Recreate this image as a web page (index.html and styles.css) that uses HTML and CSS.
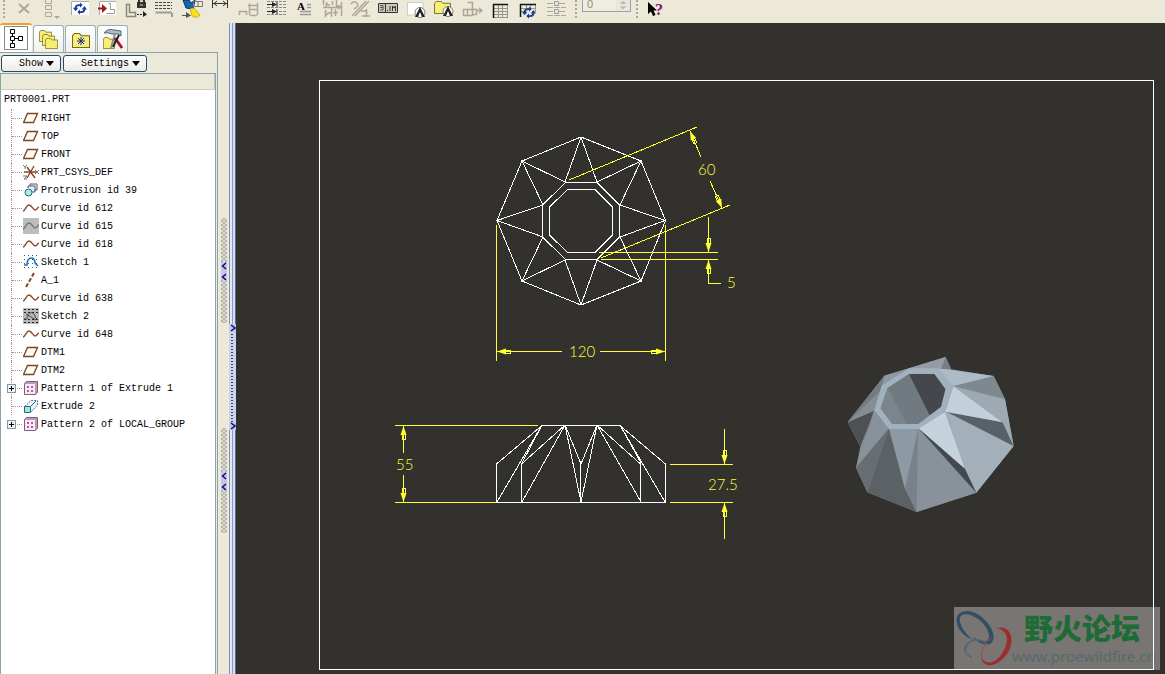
FILE: index.html
```html
<!DOCTYPE html>
<html lang="en">

<head>
  <meta charset="UTF-8">
  <meta name="viewport" content="width=device-width, initial-scale=1.0">
  <title>PRT0001.PRT</title>
  <link rel="stylesheet" href="styles.css">
</head>

<body>
  <!-- Shared icons -->
  <svg class="defs" aria-hidden="true">
    <symbol id="i-plane" viewBox="0 0 16 16"><path d="M4.500 3.500H14.500L10.500 12.500H.500Z" fill="#fffaf2" stroke="#7b4a2a" stroke-width="1.400"/></symbol>
    <symbol id="i-curve" viewBox="0 0 16 16"><path d="M0 11C3 10 3 5 6 5S10 10 12 10 14 8 16 7" fill="none" stroke="#8a4a30" stroke-width="1.400"/></symbol>
    <symbol id="i-curve-off" viewBox="0 0 16 16"><rect width="16" height="16" fill="#bdbdbd"/><path d="M0 11C3 10 3 5 6 5S10 10 12 10 14 8 16 7" fill="none" stroke="#777" stroke-width="1.400"/></symbol>
    <symbol id="i-csys" viewBox="0 0 16 16"><path d="M1 8H13M4 3L12 14M11 2L4 14" stroke="#8a4420" stroke-width="1.400"/><path d="M0 1L2 3L4 1M2 3V5M12 6L16 10M16 6L12 10M0 12H4L1 15H4" stroke="#777" fill="none"/></symbol>
    <symbol id="i-protrusion" viewBox="0 0 16 16"><path d="M7 4V2H14V8H11M5 6V4H12V10H9" fill="#e8eef4" stroke="#4a6078"/><circle cx="5.500" cy="10.500" r="3.500" fill="#a6f0ea" stroke="#39616d"/></symbol>
    <symbol id="i-sketch" viewBox="0 0 16 16"><path d="M1 1.500H16M1 5.500H16M1 9.500H16M1 13.500H16" stroke="#345a8c" stroke-dasharray="1 3"/><path d="M1 11H4C4 2 12 2 12 9L15 12" fill="none" stroke="#1f6db5" stroke-width="1.500"/></symbol>
    <symbol id="i-sketch-off" viewBox="0 0 16 16"><rect width="16" height="16" fill="#b8b8b8"/><path d="M1 1.500H16M1 4.500H16M1 11.500H16M1 14.500H16" stroke="#222" stroke-dasharray="2 2"/><path d="M1 11H4C4 3 12 3 12 9L15 12M3 6L13 12" fill="none" stroke="#444"/></symbol>
    <symbol id="i-axis" viewBox="0 0 16 16"><path d="M11 1L3 15" stroke="#8a4420" stroke-width="2" stroke-dasharray="4 2"/></symbol>
    <symbol id="i-pattern" viewBox="0 0 16 16"><path d="M1.500 3.500L3.500 1.500H14.500V12.500L12.500 14.500H1.500Z" fill="#b99bb6" stroke="#7a6078"/><path d="M2 4H12V14H2Z" fill="#fde6f9"/><path d="M4 7H6M8 7H10M4 11H6M8 11H10" stroke="#8a3a80" stroke-width="1.500"/></symbol>
    <symbol id="i-extrude" viewBox="0 0 16 16"><path d="M1.500 8.500L8 2.500H14.500V7L8 14" fill="#eef6fa" stroke="#4f7890" stroke-dasharray="2 1"/><path d="M8 8L13 3" stroke="#345a70"/><path d="M1.500 8.500H7.500V14.500H1.500Z" fill="#8ff0e2" stroke="#39616d"/></symbol>
    <symbol id="i-refresh" viewBox="0 0 16 14"><path d="M3 8V6Q3 3 7 3H9M13 6V8Q13 11 9 11H7" fill="none" stroke="#123c9c" stroke-width="2"/><path d="M0 6H6L3 10ZM10 8H16L13 4ZM8 0V6L11 3ZM8 8V14L5 11Z" fill="#123c9c"/></symbol>
    <symbol id="i-folder" viewBox="0 0 18 14" preserveAspectRatio="none"><path d="M.500 2.500L2.500.500H7.500L9.500 2.500H17.500V13.500H.500Z" fill="#f9ee74" stroke="#6f6828"/></symbol>
  </svg>

  <header class="toolbar">
    <span class="separator"></span>
    <button class="tool" aria-label="Delete" disabled><svg viewBox="0 0 28 23"><path d="M9 4L19 13M19 4L9 13" stroke="#aca899" stroke-width="2"/></svg></button>
    <button class="tool" aria-label="View states" disabled><svg viewBox="0 0 28 23"><path d="M7.500-1.500H13.500V3.500H7.500ZM7.500 5.500H13.500V9.500H7.500ZM7.500 12.500H13.500V16.500H7.500Z" fill="none" stroke="#aca899"/><path d="M16 16H22L19 19Z" fill="#aca899"/></svg></button>
    <button class="tool" aria-label="Update"><svg viewBox="0 0 28 23"><path d="M5 1H23V15H5Z" fill="#fff"/><path d="M5.500 15V1.500H23" fill="none" stroke="#aaa"/><use href="#i-refresh" x="7" y="2" width="14" height="13"/></svg></button>
    <button class="tool" aria-label="Insert view"><svg viewBox="0 0 28 23"><path d="M5 1H22V15H5Z" fill="#fff"/><path d="M5.500 15V1.500H22" fill="none" stroke="#aaa"/><path d="M4 7.500H8V4L13 8.500L8 13V9.500H4Z" fill="#a51a16"/><path d="M14.500 3.500H16.500V9.500H20.500V13.500H12.500" fill="none" stroke="#999"/></svg></button>
    <button class="tool" aria-label="Lock view"><svg viewBox="0 0 28 23"><path d="M4.500 4.500H7.500V12.500H13.500V16.500H4.500Z" fill="none" stroke="#8b8778" stroke-width="1.500"/><path d="M15 2H24V8H15Z" fill="#333"/><path d="M17 3V0Q19-2 22 0V3" fill="none" stroke="#333" stroke-width="2"/><path d="M18 5H21" stroke="#ddd"/><path d="M15 14.500H21" stroke="#222" stroke-dasharray="2 1"/><path d="M21 11L25 14.500L21 17Z" fill="#222"/></svg></button>
    <button class="tool" aria-label="Line style"><svg viewBox="0 0 28 23"><path d="M5 2.500H22M5 5.500H22M5 8.500H22" stroke="#444" stroke-dasharray="3 1"/><path d="M5.500 12.500H22M22 13V17" stroke="#a19d8e" stroke-width="2"/></svg></button>
    <button class="tool" aria-label="Show dimensions"><svg viewBox="0 0 28 23"><path d="M5 0H11L13 3 17 0 15 9 8 8Z" fill="#1467a8" stroke="#0b2f6c"/><path d="M12 9L16 8L22 15Q19 19 14 16Z" fill="#f8df21" stroke="#d3ad17"/><path d="M15.500 1.500H24.500V6.500H15.500ZM20 1V7" fill="none" stroke="#777"/><path d="M4 15.500H10" stroke="#555"/><path d="M8 12L13 15.500L8 18Z" fill="#555"/></svg></button>
    <button class="tool" aria-label="Dimension"><svg viewBox="0 0 28 23"><path d="M6.500-2V8M21.500-2V8M7 3.500H21M11 1L8 3.500L11 6M17 1L20 3.500L17 6" fill="none" stroke="#333"/></svg></button>
    <button class="tool" aria-label="Ordinate dimension" disabled><svg viewBox="0 0 28 23"><path d="M5.500 15V11.500H12.500V15M15.500 15V3.500M23.500 3V15M16 9.500H23M16 15.500H23M14 5.500H24" fill="none" stroke="#aca899" stroke-width="1.500"/></svg></button>
    <button class="tool" aria-label="Align dimensions"><svg viewBox="0 0 28 23"><path d="M5 1.500H24M5 7.500H24M5 14.500H24" stroke="#888" stroke-dasharray="3 1"/><path d="M5 4.500H14M5 11.500H14M15 2V7M15 9V14" stroke="#222"/><path d="M10 2L15 4.500L10 7ZM10 9L15 11.500L10 14Z" fill="#222"/><path d="M17 4.500H24M17 11.500H24" stroke="#888" stroke-dasharray="3 1"/></svg></button>
    <button class="tool" aria-label="Note"><svg viewBox="0 0 28 23"><text class="icon-letter" x="7" y="10">A</text><path d="M17 4.500H21M17 7.500H21M10 11.500H21M10 14.500H21" stroke="#999" stroke-width="1.500"/></svg></button>
    <button class="tool" aria-label="Clean up" disabled><svg viewBox="0 0 28 23"><path d="M5.500 0V5M8.500 2V5H12M14.500 1V5M18.500 0V6H22M23.500 2V16M5 7.500H23M7.500 10V16L10 13H13M13.500 8V17M17.500 9V16M15 12.500H20M10 4L7 7M20 9L23 6" fill="none" stroke="#aca899" stroke-width="1.500"/></svg></button>
    <button class="tool" aria-label="Surface finish" disabled><svg viewBox="0 0 28 23"><path d="M6 16L20 1M5 4Q8 0 11 3T8 9M15 11H20M20.500 9V16M16 16H24M9 16L23 1" fill="none" stroke="#aca899" stroke-width="1.500"/></svg></button>
    <button class="tool" aria-label="Geometric tolerance"><svg viewBox="0 0 28 23"><path d="M4.500 3.500H23.500V12.500H4.500ZM11.500 3V13" fill="#ccc9bb" stroke="#333"/><path d="M6 5.500H9V7.500H6M9 7V10H6" fill="none" stroke="#555"/><path d="M13 10.500H14M16 6V11M18.500 11V6L20 8L21.500 6V11" fill="none" stroke="#333"/></svg></button>
    <button class="tool" aria-label="Datum target"><svg viewBox="0 0 28 23"><path d="M5.500 2.500H21V15H5.500Z" fill="#fff" stroke="#d0cdbd"/><circle cx="18" cy="12.500" r="5" fill="#fff" stroke="#777"/><path d="M13 17L18 7L23 17H20L18 12L16 17Z" fill="#222"/></svg></button>
    <button class="tool" aria-label="Symbol from file"><svg viewBox="0 0 28 23"><use href="#i-folder" x="4" y="1" width="17" height="13"/><circle cx="18" cy="11.500" r="5" fill="#fff" stroke="#777"/><path d="M13 16L18 6L23 16H20L18 11L16 16Z" fill="#222"/></svg></button>
    <button class="tool" aria-label="Layout symbol" disabled><svg viewBox="0 0 28 23"><path d="M9.500 2.500H14.500V15.500H5.500V9.500H14M15 9.500H18.500V14.500H14M9.500 10V16M18 10.500H23M21 8L24 10.500L21 13" fill="none" stroke="#aca899" stroke-width="1.500"/></svg></button>
    <button class="tool" aria-label="Table"><svg viewBox="0 0 28 23"><path d="M7.500 4V18M12.500 4V18M16.500 4V18M21.500 4V18M7 8.500H22M7 11.500H22M7 14.500H22M7 17.500H22" stroke="#9a9687"/><path d="M7 4.500H22M7.500 4V18" stroke="#111" stroke-width="1.500"/></svg></button>
    <button class="tool" aria-label="Update tables"><svg viewBox="0 0 28 23"><path d="M12.500 4V9M16.500 4V9M21.500 4V12M7 8.500H22M7 11.500H12" stroke="#9a9687"/><path d="M6 4.500H22M6.500 4V17" stroke="#111" stroke-width="1.500"/><use href="#i-refresh" x="8" y="6" width="14" height="13"/></svg></button>
    <button class="tool" aria-label="Balloons" disabled><svg viewBox="0 0 28 23"><path d="M5 3.500H11M17 3.500H24M5 7.500H24M5 11.500H11M17 11.500H24M5 15.500H24" stroke="#aca899" stroke-dasharray="6 1"/><path d="M12.500 1.500H16.500V5.500H12.500ZM12.500 9.500H16.500V13.500H12.500Z" fill="none" stroke="#999"/></svg></button>
    <span class="separator after-tools"></span>
    <input class="sheet-number" type="number" value="0" aria-label="Sheet" disabled>
    <span class="spin" aria-hidden="true"><svg viewBox="0 0 15 12"><path d="M4 4L7.500 1L11 4ZM4 7H11L7.500 10Z" fill="#b7b5a8"/></svg></span>
    <span class="separator after-sheet"></span>
    <button class="tool" aria-label="Context help"><svg viewBox="0 0 28 23"><path d="M5 2V14L8 11.500L10 16L12.500 15L10.500 10.500H14Z" fill="#000"/><text class="icon-question" x="12" y="15">?</text></svg></button>
  </header>

  <main class="workspace">
    <section class="navigator">
      <div class="tabs">
        <button class="tab active" aria-label="Model tree"><svg viewBox="0 0 32 28"><rect x="4.500" y="1.500" width="23" height="23" fill="none" stroke="#111" stroke-dasharray="1 1"/><path d="M10.500 4.500H14.500V8.500H10.500ZM10.500 11.500H14.500V15.500H10.500ZM10.500 18.500H14.500V22.500H10.500ZM18.500 11.500H22.500V15.500H18.500ZM12.500 9V11M12.500 16V18M15 13.500H18" fill="#fff" stroke="#000"/></svg></button>
        <button class="tab" aria-label="Folder browser"><svg viewBox="0 0 32 28"><use href="#i-folder" x="5" y="4" width="13" height="12"/><use href="#i-folder" x="8" y="8" width="13" height="12"/><use href="#i-folder" x="11" y="12" width="13" height="11"/></svg></button>
        <button class="tab" aria-label="Favorites"><svg viewBox="0 0 32 28"><use href="#i-folder" x="6" y="7" width="18" height="15"/><path d="M15 11V19M11 15H19M12 12L18 18M18 12L12 18" stroke="#162b9c"/></svg></button>
        <button class="tab" aria-label="Connections"><svg viewBox="0 0 32 28"><use href="#i-folder" x="5" y="11" width="12" height="12"/><path d="M6 7Q10 2 16 4L23 5V10L20 8H14Q10 6 6 7Z" fill="#a9bdce" stroke="#516575"/><path d="M17 8L13 22" stroke="#8a8a8a" stroke-width="2"/><path d="M17 12L24 22" stroke="#a31b28" stroke-width="3"/><path d="M21 9L15 21" stroke="#222" stroke-width="2"/></svg></button>
      </div>
      <div class="pane">
        <div class="menus">
          <button class="menu">Show <i class="caret"></i></button>
          <button class="menu settings">Settings <i class="caret"></i></button>
        </div>
        <div class="tree-box">
          <div class="tree-head"></div>
          <div class="tree-root">PRT0001.PRT</div>
          <ul class="tree">
            <li><svg class="icon"><use href="#i-plane"/></svg>RIGHT</li>
            <li><svg class="icon"><use href="#i-plane"/></svg>TOP</li>
            <li><svg class="icon"><use href="#i-plane"/></svg>FRONT</li>
            <li><svg class="icon"><use href="#i-csys"/></svg>PRT_CSYS_DEF</li>
            <li><svg class="icon"><use href="#i-protrusion"/></svg>Protrusion id 39</li>
            <li><svg class="icon"><use href="#i-curve"/></svg>Curve id 612</li>
            <li><svg class="icon"><use href="#i-curve-off"/></svg>Curve id 615</li>
            <li><svg class="icon"><use href="#i-curve"/></svg>Curve id 618</li>
            <li><svg class="icon"><use href="#i-sketch"/></svg>Sketch 1</li>
            <li><svg class="icon"><use href="#i-axis"/></svg>A_1</li>
            <li><svg class="icon"><use href="#i-curve"/></svg>Curve id 638</li>
            <li><svg class="icon"><use href="#i-sketch-off"/></svg>Sketch 2</li>
            <li><svg class="icon"><use href="#i-curve"/></svg>Curve id 648</li>
            <li><svg class="icon"><use href="#i-plane"/></svg>DTM1</li>
            <li><svg class="icon"><use href="#i-plane"/></svg>DTM2</li>
            <li><button class="expand" aria-label="Expand Pattern 1"></button><svg class="icon"><use href="#i-pattern"/></svg>Pattern 1 of Extrude 1</li>
            <li><svg class="icon"><use href="#i-extrude"/></svg>Extrude 2</li>
            <li><button class="expand" aria-label="Expand Pattern 2"></button><svg class="icon"><use href="#i-pattern"/></svg>Pattern 2 of LOCAL_GROUP</li>
          </ul>
        </div>
      </div>
    </section>

    <!-- Sash between the navigator and the drawing -->
    <div class="grips">
      <div class="grip"><svg viewBox="0 0 6 18"><path d="M5 1L1.500 4L5 7M5 12L1.500 15L5 18" fill="none" stroke="#0c0c8c" stroke-width="1.500"/></svg></div>
      <div class="grip"><svg viewBox="0 0 6 18"><path d="M5 1L1.500 4L5 7M5 12L1.500 15L5 18" fill="none" stroke="#0c0c8c" stroke-width="1.500"/></svg></div>
    </div>
    <div class="sash">
      <div class="sash-thumb">
        <svg viewBox="0 0 6 8"><path d="M1 1L5 4L1 7" fill="none" stroke="#0c0c8c" stroke-width="1.500"/></svg>
        <svg viewBox="0 0 6 8"><path d="M1 1L5 4L1 7" fill="none" stroke="#0c0c8c" stroke-width="1.500"/></svg>
      </div>
    </div>

    <section class="canvas">
      <div class="watermark">
        <svg class="watermark-logo" viewBox="0 0 58 60"><path fill-rule="evenodd" d="M3 16C0 5 13 0 25 8C38 17 44 32 36 37C29 39 22 34 19 30C28 36 36 36 35 28C34 17 17 4 8 8C2 12 9 25 19 33C9 29 4 22 3 16Z" fill="#2f4f68"/><path d="M18 33C8 38 8 47 18 50C10 49 9 39 18 34C24 32 30 33 33 37C28 34 23 32 18 33Z" fill="#4c6878" stroke="#4c6878"/><path d="M43 21C57 17 62 34 53 47C44 60 30 62 27 51C35 61 45 53 50 43C55 33 54 24 43 21Z" fill="#9b2d32"/><path d="M29 56C25 47 30 35 38 31" fill="none" stroke="#9b4b4c"/></svg>
        <div class="watermark-text">
          <strong lang="zh">野火论坛</strong>
          <span>www.proewildfire.cn</span>
        </div>
      </div>

      <svg class="drawing" viewBox="236 23 929 651" role="img" aria-label="Drawing views">
        <!-- Sheet border -->
        <rect class="edge" x="319.500" y="80.500" width="834" height="589"/>

        <!-- Top view -->
        <path class="edge" d="M581 137L641 161L665.500 220.500L641 281L581 305L522 281L497 220.500L522 161Z"/>
        <path class="edge" d="M565.500 182.500H597L619.500 205V237L597 259.500H565.500L542.500 237V205Z"/>
        <path class="edge" d="M567.500 189.500H595L612.500 207V235L595 252.500H567.500L549.500 235V207Z"/>
        <path class="edge" d="M565 182L581 137L597 182L641 161L620 205L665 220.500L620 237L641 281L597 260L581 305L565 260L522 281L543 237L497 220.500L543 205L522 161Z"/>

        <!-- Front view -->
        <path class="dim" d="M395 425.500H538M395 502.500H522M670 464.500H733M670 502.500H733"/>
        <path class="edge" d="M542 425.500H620L665.500 464V502.500H496.500V464ZM542 425L522 463M542 425L497 502M620 425L641 463M620 425L665 502"/>
        <path class="edge" d="M522 502L565 425L521.500 464V502M565 425L581 464L597 425L581 502L565 425M580.500 464V502M641 502L597 425L640.500 464V502"/>

        <!-- Dimensions -->
        <path class="dim" d="M569 180L697 127M601 258L730 205M690 131L701 157M710 181L722 208"/>
        <path class="dim" d="M599 252.500H718M601 259.500H718M708.500 217V252M708.500 260V283.500H721"/>
        <path class="dim" d="M496.500 225V361M665.500 225V361M497 351.500H562M600 351.500H665"/>
        <path class="dim" d="M403.500 426V453M403.500 475V502M724.500 429V464M724.500 503V539"/>
        <defs>
          <g id="arrow"><path class="arrow-head" d="M0 0L-3 9H3Z"/><path class="dim" d="M-1.500 8.500H1.500V13.500H-1.500Z"/></g>
        </defs>
        <use href="#arrow" transform="translate(690 131) rotate(-23)"/>
        <use href="#arrow" transform="translate(722 208) rotate(157)"/>
        <use href="#arrow" transform="translate(708.500 252) rotate(180)"/>
        <use href="#arrow" transform="translate(708.500 260)"/>
        <use href="#arrow" transform="translate(497 351.500) rotate(-90)"/>
        <use href="#arrow" transform="translate(665 351.500) rotate(90)"/>
        <use href="#arrow" transform="translate(403.500 426)"/>
        <use href="#arrow" transform="translate(403.500 502) rotate(180)"/>
        <use href="#arrow" transform="translate(724.500 464) rotate(180)"/>
        <use href="#arrow" transform="translate(724.500 503)"/>
        <text class="value" x="698" y="175">60</text>
        <text class="value" x="727" y="288">5</text>
        <text class="value" x="569" y="357">120</text>
        <text class="value" x="396" y="470">55</text>
        <text class="value" x="708" y="490">27.5</text>

        <!-- Shaded view -->
        <g transform="translate(835 345) scale(.3333)">
          <path d="M38 232L148 92L332 36L348 73L476 93L510 162L536 303L424 443L245 501L97 442L63 368L76 305Z" fill="#858e95"/>
          <path d="M148 92L222 70L136 130Z" fill="#8d98a2"/>
          <path d="M222 70L332 36L322 74Z" fill="#929da7"/>
          <path d="M332 36L350 75L318 72Z" fill="#777f86"/>
          <path d="M38 232L148 92L140 125L118 190Z" fill="#747b81"/>
          <path d="M38 232L136 137L118 195Z" fill="#858e96"/>
          <path d="M38 232L117 198L76 305Z" fill="#4d5155"/>
          <path d="M117 195L106 235L76 305L90 270Z" fill="#60666b"/>
          <path d="M118 195L162 250L63 368Z" fill="#88929a"/>
          <path d="M63 368L162 250L97 442Z" fill="#676d72"/>
          <path d="M97 442L162 250L210 430L245 501Z" fill="#5c6166"/>
          <path d="M162 250H250L210 432Z" fill="#8e9aa3"/>
          <path d="M250 250L210 432L245 501Z" fill="#79828a"/>
          <path d="M250 250L245 501L424 443Z" fill="#89929a"/>
          <path d="M330 198L390 375L424 443L536 303Z" fill="#a4b0b9"/>
          <path d="M330 198L390 375L402 403L378 340Z" fill="#606970"/>
          <path d="M250 250L330 200L390 372Z" fill="#c4d2dc"/>
          <path d="M250 250L390 372L424 443Z" fill="#434a4f"/>
          <path d="M330 198L503 232L536 303Z" fill="#596168"/>
          <path d="M355 123L503 232L330 200Z" fill="#c2d0da"/>
          <path d="M355 123L510 162L536 303L503 232Z" fill="#9daab4"/>
          <path d="M355 123L476 93L510 162Z" fill="#7e888f"/>
          <path d="M222 70L330 72L476 93L355 123L300 80Z" fill="#adbbc6"/>
          <path d="M222 70H310L355 123L330 200L250 252H162L118 195L140 122Z" fill="#a1b1be"/>
          <path d="M222 87H298L331 132L318 185L250 237H172L137 190L158 128Z" fill="#717a80"/>
          <path d="M137 190L158 128L215 237H172Z" fill="#7b858c"/>
          <path d="M222 87H298L331 132L318 185L284 211Z" fill="#44484c"/>
        </g>
      </svg>
    </section>
  </main>
</body>

</html>
```
FILE: styles.css
```css
/* Global styles */
* {
  box-sizing: border-box;
}

body {
  margin: 0;
  height: 100vh;
  display: flex;
  flex-direction: column;
  overflow: hidden;
  background-color: #ece9d8;
  color: #000;
  font-family: 'Liberation Mono', monospace;
  font-size: 10px;
}

button {
  font: inherit;
  color: inherit;
  padding: 0;
  border: none;
  background: none;
}

svg {
  display: block;
}

.defs {
  position: absolute;
  width: 0;
  height: 0;
}

/* Toolbar */
.toolbar {
  display: flex;
  flex: none;
  height: 23px;
  overflow: hidden;
}

.separator {
  width: 2px;
  height: 18px;
  margin: 0 5px 0 3px;
  border-left: 2px dotted #aca899;
}

.after-tools {
  margin-left: 5px;
}

.after-sheet {
  margin-left: 5px;
}

.tool {
  flex: none;
  width: 28px;
  height: 23px;
}

.icon-letter {
  font: bold 11px 'Liberation Serif', serif;
}

.icon-question {
  font: bold 16px 'Liberation Serif', serif;
  fill: #7b117b;
}

.sheet-number {
  width: 34px;
  height: 12px;
  padding: 0 0 3px 4px;
  border: 1px solid #8fa5b5;
  border-width: 0 0 1px 1px;
  background-color: #efeddf;
  color: #8c8a7c;
  font: 11px 'Liberation Sans', sans-serif;
  appearance: textfield;
}

.spin {
  width: 15px;
  height: 12px;
  border: 1px solid #8fa5b5;
  border-width: 0 1px 1px 0;
  background-color: #e8e6dc;
}

/* Navigator */
.workspace {
  display: flex;
  flex: 1;
  min-height: 0;
}

.navigator {
  display: flex;
  flex-direction: column;
  flex: none;
  width: 218px;
}

.tabs {
  display: flex;
  align-items: flex-end;
  gap: 1px;
  height: 29px;
}

.tab {
  width: 31px;
  height: 27px;
  overflow: hidden;
  border: 1px solid #9bb0bd;
  border-bottom: none;
  border-radius: 3px 3px 0 0;
  background: linear-gradient(#fff, #f1f0e8);
}

.tab svg {
  width: 32px;
  height: 28px;
}

.tab.active {
  width: 32px;
  height: 29px;
  border: none;
  border-top: 2px solid #f0a12d;
  background: #fff;
}

.pane {
  display: flex;
  flex: 1;
  flex-direction: column;
  border: 1px solid #8aa3ad;
  border-width: 1px 1px 0 0;
}

.menus {
  display: flex;
  gap: 2px;
  padding: 2px 1px 1px;
}

.menu {
  display: flex;
  align-items: center;
  justify-content: flex-end;
  gap: 3px;
  width: 60px;
  height: 17px;
  padding-right: 6px;
  border: 1px solid #204a70;
  border-radius: 3px;
  background: linear-gradient(#fff, #ecebe4);
}

.settings {
  width: 84px;
}

.caret {
  border: 4px solid transparent;
  border-top: 5px solid #000;
  border-bottom: none;
}

.tree-box {
  flex: 1;
  width: 216px;
  border: 1px solid #8aa3ad;
  border-bottom: none;
  background-color: #fff;
}

.tree-head {
  height: 16px;
  border-right: 1px solid #b8c6c4;
  border-bottom: 1px solid #cfccba;
  background-color: #ebe9d9;
}

.tree-root {
  padding: 1px 0 0 3px;
  line-height: 18px;
}

.tree {
  margin: 0 0 0 10px;
  padding: 0;
  list-style: none;
}

.tree li {
  position: relative;
  display: flex;
  align-items: center;
  height: 18px;
  border-left: 1px dotted #999;
  white-space: nowrap;
}

.tree li:last-child {
  border-left-color: transparent;
}

.tree li::before {
  content: "";
  width: 10px;
  border-top: 1px dotted #999;
}

.icon {
  width: 16px;
  height: 16px;
  margin: 0 2px 0 1px;
}

.expand {
  position: absolute;
  left: -5px;
  top: 5px;
  width: 9px;
  height: 9px;
  border: 1px solid #7898b5;
  background: linear-gradient(#000, #000) center / 5px 1px no-repeat, linear-gradient(#000, #000) center / 1px 5px no-repeat, #f4f2ea;
}

/* Sash */
.grips {
  display: flex;
  flex: none;
  flex-direction: column;
  align-items: center;
  gap: 105px;
  width: 11px;
  padding-top: 195px;
}

.grip {
  display: flex;
  align-items: center;
  width: 6px;
  height: 105px;
  background: repeating-conic-gradient(#b5b2aa 0 25%, #dedbd0 0 50%) 0 0 / 4px 4px;
}

.grip svg {
  width: 6px;
  height: 18px;
  background-color: #c6c7e6;
}

.sash {
  flex: none;
  width: 7px;
  padding-top: 301px;
  background: linear-gradient(90deg, #7c8fc0 0 1px, #e4e8ee 1px 3px, #8c9cc8 3px 4px, #d5def4 4px 6px, #5b6c92 6px);
}

.sash-thumb {
  display: flex;
  flex-direction: column;
  justify-content: space-between;
  align-items: center;
  height: 106px;
  background: radial-gradient(#3c4478 1px, transparent 1px) 0 0 / 7px 3px #ccd2ea;
}

.sash-thumb svg {
  width: 6px;
  height: 8px;
  background-color: #c6c7e6;
}

/* Drawing */
.canvas {
  position: relative;
  flex: 1;
  min-width: 0;
  background-color: #33312d;
}

.drawing {
  position: relative;
  width: 100%;
  height: 100%;
}

.edge {
  fill: none;
  stroke: #fff;
  shape-rendering: crispEdges;
}

.dim {
  fill: none;
  stroke: #ff3;
  shape-rendering: crispEdges;
}

.arrow-head {
  fill: #ff3;
}

.value {
  fill: #ff3;
  font: 300 15px Lato, sans-serif;
}

/* Watermark */
.watermark {
  position: absolute;
  right: 5px;
  bottom: 4px;
  display: flex;
  width: 206px;
  height: 63px;
  background-color: #787572;
}

.watermark-logo {
  flex: none;
  width: 58px;
  height: 60px;
}

.watermark-text {
  display: flex;
  flex-direction: column;
  white-space: nowrap;
}

.watermark strong {
  padding-left: 12px;
  color: #1d6b35;
  font: 900 29px/40px 'Noto Sans CJK SC', sans-serif;
}

.watermark span {
  color: #56696c;
  font: 15px/18px 'Noto Sans', sans-serif;
}
```
